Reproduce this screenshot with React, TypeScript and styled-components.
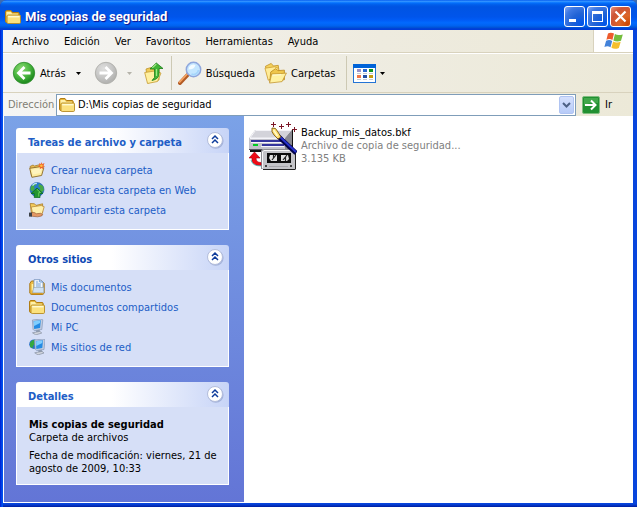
import React from "react";
import styled, { createGlobalStyle } from "styled-components";

const UI_FONT = `"DejaVu Sans Condensed", "DejaVu Sans", "Noto Sans", sans-serif`;

const GlobalStyle = createGlobalStyle`
  * { box-sizing: border-box; }
  body { margin: 0; background: #3c6bb0; }
  button, input { font: inherit; color: inherit; }
  button { cursor: pointer; }
`;

const Window = styled.div`
  display: flex;
  flex-direction: column;
  min-height: 100vh;
  padding: 0 4px 4px 3px;
  border-radius: 7px 7px 0 0;
  background: linear-gradient(90deg, #0019cf 0, #0050ee 2px, #0050ee 3px, transparent 3px),
    linear-gradient(180deg, #0845dd 0, #0845dd calc(100% - 3px), #001ea0 100%);
  font-family: ${UI_FONT};
  font-size: 11px;
  line-height: 13px;
  color: #000;
`;

const TitleBar = styled.header`
  display: flex;
  align-items: center;
  gap: 4px;
  height: 30px;
  margin: 0 -4px 0 -3px;
  padding: 3px 6px 0 5px;
  border-radius: 7px 7px 0 0;
  background: linear-gradient(180deg, #0058ee 0, #3593ff 4%, #288eff 6%, #127dff 8%, #036ffc 10%, #0262ee 14%, #0057e5 20%, #0054e3 24%, #0055eb 56%, #005bf5 66%, #026afe 76%, #0062ef 86%, #0052d6 92%, #003dd7 96%, #003dd7 100%);
`;

const Title = styled.h1`
  flex: 1;
  margin: 0;
  font-family: Roboto, "Liberation Sans", sans-serif;
  font-size: 13px;
  font-weight: 700;
  line-height: 18px;
  color: #fff;
  text-shadow: 1px 1px 1px #0f1089;
`;

const CaptionButtons = styled.div`
  display: flex;
  gap: 2px;
`;

const CaptionButton = styled.button<{ $danger?: boolean }>`
  width: 21px;
  height: 21px;
  padding: 0;
  border: 1px solid #fff;
  border-radius: 3px;
  background: ${(p) =>
    p.$danger
      ? "radial-gradient(circle at 90% 90%, #cc4600 0%, #dc6527 35%, #cd5436 70%, #e8917b 100%)"
      : "radial-gradient(circle at 90% 90%, #0054e9 0%, #2263d5 45%, #3f79e4 75%, #86a8f0 100%)"};
  svg { display: block; }
`;

const MenuRow = styled.div`
  display: flex;
  height: 23px;
  background: linear-gradient(90deg, #f5f5f4 0%, #eeebdf 60%, #ece9d8 100%);
  border-bottom: 1px solid #d8d2bd;
`;

const MenuBar = styled.nav`
  display: flex;
  flex: 1;
  align-items: center;
  gap: 15px;
  padding-left: 9px;
`;

const PlainButton = styled.button`
  display: flex;
  align-items: center;
  padding: 0;
  border: 0;
  background: none;
  white-space: nowrap;
`;

const Throbber = styled.div`
  display: flex;
  align-items: center;
  justify-content: center;
  width: 40px;
  height: 22px;
  border-left: 1px solid #d8d2bd;
  background: #fff;
`;

const Toolbar = styled.div`
  display: flex;
  align-items: center;
  height: 40px;
  padding-left: 9px;
  border-top: 1px solid #fff;
  border-bottom: 1px solid #d8d2bd;
  background: linear-gradient(90deg, #f5f5f4 0%, #efede3 50%, #ece9d8 100%);
`;

const ToolButton = styled(PlainButton)<{ $trail?: number }>`
  gap: 4px;
  margin-right: ${(p) => p.$trail ?? 0}px;
`;

const CaretButton = styled(PlainButton)<{ $trail?: number }>`
  margin-right: ${(p) => p.$trail ?? 0}px;
`;

const Separator = styled.div`
  width: 1px;
  height: 34px;
  margin: 0 6px 0 7px;
  background: #cdc9b4;
`;

const AddressBar = styled.form`
  display: flex;
  align-items: center;
  height: 23px;
  padding-left: 5px;
  background: linear-gradient(90deg, #f5f5f4 0%, #efede3 50%, #ece9d8 100%);
`;

const AddressLabel = styled.label`
  width: 48px;
  color: #7f7c73;
`;

const AddressField = styled.div`
  display: flex;
  flex: 1;
  align-items: center;
  gap: 3px;
  height: 22px;
  padding: 0 1px 0 2px;
  border: 1px solid #7f9db9;
  background: #fff;
`;

const AddressInput = styled.input`
  flex: 1;
  min-width: 0;
  height: 18px;
  padding: 0;
  border: 0;
  outline: 0;
  background: none;
`;

const DropButton = styled.button`
  display: flex;
  align-items: center;
  justify-content: center;
  width: 15px;
  height: 18px;
  padding: 0;
  border: 1px solid #b0c4f2;
  border-radius: 2px;
  background: linear-gradient(180deg, #d5e0fd, #b7cbf8);
`;

const GoButton = styled(PlainButton)`
  gap: 5px;
  width: 57px;
  padding-left: 6px;
`;

const Content = styled.div`
  display: flex;
  flex: 1;
  border-bottom: 1px solid #fff;
  border-left: 1px solid #fff;
  background: #fff;
`;

const Sidebar = styled.aside`
  display: flex;
  flex-direction: column;
  flex: 0 0 240px;
  gap: 15px;
  padding: 12px 15px 16px 12px;
  background: linear-gradient(180deg, #7ba2e7 0%, #6375d6 100%);
`;

const Panel = styled.section`
  display: flex;
  flex-direction: column;
`;

const PanelHeader = styled.header`
  display: flex;
  align-items: flex-start;
  justify-content: space-between;
  height: 25px;
  padding: 2px 4px 0 12px;
  border-radius: 3px 3px 0 0;
  background: linear-gradient(90deg, #fff 0%, #fff 45%, #c7d4f7 100%);
`;

const PanelTitle = styled.h2<{ $strong?: boolean }>`
  margin: 0;
  padding-top: 6px;
  font-size: 11px;
  line-height: 13px;
  font-weight: 700;
  color: ${(p) => (p.$strong ? "#0d48b4" : "#215dc6")};
`;

const PanelBody = styled.div<{ $details?: boolean }>`
  padding: ${(p) => (p.$details ? "11px 8px 9px 12px" : "7px 8px 9px 12px")};
  border: 1px solid #fff;
  border-top: 0;
  background: #d6dff7;
`;

const TaskList = styled.ul`
  margin: 0;
  padding: 0;
  list-style: none;
`;

const TaskLink = styled.a`
  display: flex;
  align-items: center;
  gap: 6px;
  height: 20px;
  color: #215dc6;
  text-decoration: none;
  white-space: nowrap;
  svg { flex: none; }
`;

const Paragraph = styled.p`
  margin: 0 0 5px;
  &:last-child { margin-bottom: 0; }
`;

const FileArea = styled.main`
  flex: 1;
  padding: 6px 5px;
`;

const FileTile = styled.a`
  display: flex;
  gap: 4px;
  color: #000;
  text-decoration: none;
  svg { flex: none; }
`;

const FileText = styled.div`
  padding-top: 4px;
  white-space: nowrap;
`;

const Muted = styled.div`
  color: #808080;
`;

function Folder({ size = 16 }: { size?: number }) {
  return (
    <svg width={size} height={size} viewBox="0 0 16 16" aria-hidden="true">
      <path d="M.5 3Q.5 1.5 2 1.5h4L7.5 3.5H13q1.2 0 1.2 1.2v8.8H2q-1.5 0-1.5-1.3z" fill="#e8b93c" stroke="#b07c14" />
      <path d="M1.5 3h4.3l1.3 1.7h5.8V7H1.5z" fill="#fff0a8" />
      <path d="M3.2 6h11.2q1.1 0 1.1 1v6.3q0 1.2-1.2 1.2H3.2Q2 14.5 2 13.3V7.1Q2 6 3.2 6z" fill="#fbe17f" stroke="#b58a25" strokeWidth=".9" />
      <path d="M3.2 7h11.2v1.4H3.2z" fill="#fffad2" />
    </svg>
  );
}

function OpenFolder() {
  return (
    <>
      <path d="M1 4.5 4 3l1.5 1 5-1.3 1.5.8V13L2.5 14z" fill="#e9bb4e" stroke="#a57c2c" strokeWidth=".8" />
      <path d="M.7 6.3 11.8 4.6l3 1.2-2.2 7.7-9.7 1.8z" fill="#fdeca0" stroke="#8c6a26" strokeWidth=".9" />
      <path d="M3 7.8 12.7 6l-1 5-8 1.5z" fill="#fff8ca" opacity=".7" />
    </>
  );
}

function NewFolderIcon() {
  return (
    <svg width="16" height="16" viewBox="0 0 16 16" aria-hidden="true">
      <OpenFolder />
      <path d="m12.3 0 .8 2.1 2.4-1-1 2.3 1.5 1-2 .6.5 2.3-2.1-1.4-1.6 1.4.1-2.3-2-.5 1.8-1.2-.8-2 2 .8z" fill="#ef6328" />
      <circle cx="12.4" cy="3.8" r="1.3" fill="#ffc23b" />
    </svg>
  );
}

function PublishIcon() {
  return (
    <svg width="16" height="16" viewBox="0 0 16 16" aria-hidden="true">
      <circle cx="8" cy="7.5" r="7" fill="#2879ce" stroke="#245d9b" strokeWidth=".6" />
      <path d="M2 4.5Q5 .5 8 1L7 3 4.8 4.2l1 2L4 9.5 1.4 8zM10 2l4 2 .9 4-2.6 3-1.8-3 .8-2-2-1z" fill="#48aa45" />
      <path d="M3.5 3.5Q5.5 1 8 1.5" stroke="#b8e0ff" strokeWidth="1.3" fill="none" />
      <path d="m8 6 6 5.5h-3V15.6H5.3V11.5H2z" fill="#22952e" stroke="#086b20" strokeWidth=".8" />
      <path d="m8 7.4 3.5 3.2H9.8v4" stroke="#6bd15b" fill="none" />
    </svg>
  );
}

function ShareIcon() {
  return (
    <svg width="16" height="16" viewBox="0 0 16 16" aria-hidden="true">
      <path d="m1.2 1.5 4.3.3 1.5 1.6 6.6-1.6v8.7L2.5 12z" fill="#f4cc5c" stroke="#a87a26" strokeWidth=".8" />
      <path d="m2.2 5 10-1.5 3 1.2-2.6 8.8-8.8-1z" fill="#fff0ac" stroke="#b98a36" strokeWidth=".8" />
      <path d="m2 10.8 3-.4 2.4 1.3 4.3-.4 2 1.2-1.1 1.5-4 .8-5-.5-2-.3z" fill="#e39865" stroke="#905029" strokeWidth=".6" />
      <path d="M0 10.6h3v4H0z" fill="#3c4148" />
    </svg>
  );
}

function DocumentsIcon() {
  return (
    <svg width="16" height="16" viewBox="0 0 16 16" aria-hidden="true">
      <path d="M.8 4.5 2.5 2H13l2.2 2.5v9.7l-1.4 1.3H2.2L.8 14.2z" fill="#edbd45" stroke="#a97819" />
      <path d="M5 .7h6L14 3v8H5z" fill="#f8fcff" stroke="#708db9" strokeWidth=".8" />
      <path d="M10.7.8V3H14M6.8 3h2.5M6.8 5h5M6.8 7h5" stroke="#6a9bd6" fill="none" />
      <path d="M3.4 5v6.5" stroke="#fff1a2" strokeWidth="1.4" />
      <path d="M4.5 8.5h10.3v5.4H3.6z" fill="#cfe1f3" stroke="#899eae" strokeWidth=".6" />
      <path d="M2.2 14.6h11.5" stroke="#d79c26" strokeWidth="1.4" />
    </svg>
  );
}

function Monitor() {
  return (
    <>
      <path d="m3.4 1 8.4-1 2 .8-1 9.7-7.4 1.2L4 10.3z" fill="#c3cddf" stroke="#8598ba" strokeWidth=".7" />
      <path d="m4.6 2 7.2-.8-.7 7.9-6 .9z" fill="#248be4" />
      <path d="m4.9 2.3 6.4-.7-.3 2.5-5.9 3z" fill="#80ceff" />
      <path d="m7 11.2 3.5-.5.8 2.6-4 .5z" fill="#8f9cb2" />
      <path d="M3.5 13.8 10.8 12.4l2 1.6-6 1.9z" fill="#d2d6de" stroke="#8690a2" strokeWidth=".7" />
    </>
  );
}

function ComputerIcon() {
  return (
    <svg width="16" height="16" viewBox="0 0 16 16" aria-hidden="true">
      <Monitor />
    </svg>
  );
}

function NetworkIcon() {
  return (
    <svg width="16" height="16" viewBox="0 0 16 16" aria-hidden="true">
      <circle cx="5" cy="5.2" r="4.8" fill="#2870c4" />
      <path d="M1 3.8Q3 .5 6 .8L5 3.2l1 2L3.7 7l.5 2L1 8z" fill="#35a83e" />
      <g transform="translate(2.2 0)"><Monitor /></g>
    </svg>
  );
}

function Chevrons() {
  return (
    <svg width="20" height="20" viewBox="0 0 20 20" aria-hidden="true">
      <circle cx="10.8" cy="11" r="7.8" fill="#7587b8" opacity=".45" />
      <circle cx="10" cy="10" r="7.5" fill="#fff" stroke="#b3bddb" />
      <path d="m7 9 3-3 3 3M7 13l3-3 3 3" stroke="#0d3b9b" strokeWidth="1.5" fill="none" />
    </svg>
  );
}

function RoundArrow({ forward }: { forward?: boolean }) {
  const id = forward ? "forwardFill" : "backFill";
  return (
    <svg width="24" height="24" viewBox="0 0 24 24" aria-hidden="true">
      <defs>
        <radialGradient id={id} cx="38%" cy="30%" r="65%">
          <stop offset="0" stopColor={forward ? "#dededd" : "#8bd873"} />
          <stop offset=".6" stopColor={forward ? "#c8c8c7" : "#4bb840"} />
          <stop offset="1" stopColor={forward ? "#b4b4b2" : "#238f22"} />
        </radialGradient>
      </defs>
      <circle cx="12" cy="12" r="10.7" fill={`url(#${id})`} stroke={forward ? "#aaa9a5" : "#2c8a2b"} strokeWidth=".8" />
      <path
        d={forward ? "M5.5 12H17M11.5 6l6 6-6 6" : "M18.5 12H7M12.5 6l-6 6 6 6"}
        fill="none" stroke="#fff" strokeWidth="2.8"
      />
    </svg>
  );
}

function Caret({ muted }: { muted?: boolean }) {
  return (
    <svg width="5" height="3" viewBox="0 0 5 3" aria-hidden="true">
      <path d="M0 0h5L2.5 3z" fill={muted ? "#b5b3aa" : "#000"} />
    </svg>
  );
}

function UpFolderIcon() {
  return (
    <svg width="20" height="24" viewBox="0 0 20 24" aria-hidden="true">
      <path d="m2 8 5-1.5 1.5 1.6L15 7v12L4 22z" fill="#f0cb57" stroke="#bd942a" strokeWidth=".8" />
      <path d="m.7 11.5 10-1.5L17 12l-3.5 8.5-10 2z" fill="#fff0a0" stroke="#c69c32" strokeWidth=".8" />
      <path d="m8 19.5 2.5-3V8H6l6.3-6L19 7.5h-4V13q0 5-7 6.5z" fill="#41b536" stroke="#1e7d1a" strokeWidth=".8" />
      <path d="m8.3 6.8 4-3.7M12.5 8v7" stroke="#a2e984" strokeWidth="1.2" />
    </svg>
  );
}

function SearchIcon() {
  return (
    <svg width="24" height="24" viewBox="0 0 24 24" aria-hidden="true">
      <path d="m2 22 8.5-9" stroke="#b35b25" strokeWidth="4" strokeLinecap="round" />
      <path d="m1.7 21 8-8.5" stroke="#f5a363" strokeWidth="1.8" strokeLinecap="round" />
      <circle cx="15.5" cy="8.5" r="7.2" fill="#c4e6ff" stroke="#8fa6dc" strokeWidth="1.5" />
      <path d="M10.5 8.5a5 5 0 0 1 7-4.6q-1 4.6-7 4.6z" fill="#f3fbff" />
      <path d="M20.5 9a5.2 5.2 0 0 1-7 4.2" fill="none" stroke="#a5d5fb" strokeWidth="1.8" />
    </svg>
  );
}

function FoldersIcon() {
  return (
    <svg width="23" height="24" viewBox="0 0 24 24" aria-hidden="true">
      <path d="m1.5 5 6-3 2.4 2.7 5-.7 1 10L5 19z" fill="#f5d25e" stroke="#be8d20" strokeWidth=".8" />
      <path d="m1 7 10-1.5 4.5 2L14 16l-9.6 3.5z" fill="#ffec98" stroke="#cc9b2c" strokeWidth=".8" />
      <path d="m7 11 5-3.5 2.8 2 6.5-.5V19L6 21.5z" fill="#efc64b" stroke="#b98619" strokeWidth=".8" />
      <path d="m8 13 9-.3 6.4-.7-4.6 9-13 1.5z" fill="#fff1a0" stroke="#c2932c" strokeWidth=".8" />
      <path d="m9 14.2 9-.4" stroke="#fffce0" />
    </svg>
  );
}

function ViewsIcon() {
  const colors = ["#9a91c8", "#2d68ce", "#10941c", "#f17749", "#254fa4", "#c79a12"];
  return (
    <svg width="23" height="19" viewBox="0 0 23 19" aria-hidden="true">
      <rect x=".5" y=".5" width="22" height="18" fill="#fff" stroke="#2474d5" />
      <path d="M0 0h23v4H0z" fill="#0063d8" />
      {colors.map((c, i) => (
        <g key={c}>
          <rect x={4 + (i % 3) * 6} y={i < 3 ? 5 : 11} width="4" height="3" fill={c} />
          <rect x={4 + (i % 3) * 6} y={i < 3 ? 9 : 15} width="4" height="1" fill="#c3c8d2" />
        </g>
      ))}
    </svg>
  );
}

function FlagIcon() {
  return (
    <svg width="20" height="18" viewBox="0 0 20 18" aria-hidden="true">
      <path d="M4 1.4Q7-.2 10 1.6L8.4 8Q5.7 6.2 2.4 7.7z" fill="#ed5b2d" />
      <path d="M10.9 2.1q3 1.8 7.9.3L17 8.8q-4.5 1.6-7.6-.4z" fill="#74bd3d" />
      <path d="M2.1 8.7q3.3-1.4 6.1.2l-1.7 6.4Q3.8 13.6.4 15z" fill="#4382d9" />
      <path d="M9.1 9.4q3.1 1.9 7.6.4L14.9 16q-4.3 1.8-7.5-.2z" fill="#f5bf2d" />
    </svg>
  );
}

function BackupIcon() {
  const stars: [number, number][] = [[24, 2], [32, 4], [39, 2], [45, 7]];
  return (
    <svg width="48" height="49" viewBox="0 0 48 49" aria-hidden="true">
      <path d="M1 16h36l6-8h1v18l-4 4H1z" fill="#111" />
      <path d="M6 8h37l-7 8H0z" fill="#d3d3da" />
      <path d="M6.5 8.5h36M6 9l-5 7h34" stroke="#f4f4f8" fill="none" />
      <path d="M0 16h36v12H0z" fill="#c2c2ca" />
      <path d="m36 16 7-8v15l-7 6z" fill="#898991" />
      <path d="M2 18h33v2H2zM13 22h22v2H13z" fill="#34349c" />
      <path d="M1 16.5h35M2 20.5h33M12 24.5h23" stroke="#f4f4fa" />
      <path d="M4 22h5v2H4z" fill="#00ca22" />
      <path d="M0 27.5h36" stroke="#55555f" />
      <path d="M14 28h33v19l-1 1H14z" fill="#222" />
      <path d="M14 27h30l2 2v18H12V29z" fill="#c4c4c8" />
      <path d="M12.5 47V29l2-1.5h29" stroke="#8d8d93" fill="none" />
      <path d="M13.5 46V30l1.5-1.5h28" stroke="#f8f8f8" fill="none" />
      <path d="M18 31h24v10H18z" fill="#0c0c0c" />
      <path d="M21 33h7v6h-6l-2-3zM32 33h7l1 4-2 2h-6z" fill="#e1e1e1" />
      <path d="m23 38 4-5M34 38l4-5M24.5 33v3M36.5 35v4" stroke="#222" strokeWidth="1.2" />
      <path d="M16 43h2v2h-2zM41 43h2v2h-2z" fill="#444" />
      <path d="M20 44.5h19" stroke="#a5a5aa" />
      <path d="m29 14 18 17" stroke="#00004a" strokeWidth="4.5" />
      <path d="m30 14 17 16" stroke="#2733cc" strokeWidth="2" />
      <path d="M23 6q4-1 6 4l3 5-3 2-4-4q-3-3-2-7z" fill="#ffe070" stroke="#6e4a0a" strokeWidth=".8" />
      <path d="m24.5 8 4 6" stroke="#fffbd0" strokeWidth="1.4" />
      {stars.map(([x, y]) => (
        <path key={x} d={`M${x - 2} ${y + 0.5}h5M${x + 0.5} ${y - 2}v5`} stroke="#7c1626" strokeWidth="1" />
      ))}
      <path d="M5.5 30 0 36h3v3q1 4.5 9 4.5v-3q-5 0-5-4.5h4z" fill="#f00b15" stroke="#a60015" strokeWidth=".6" />
      <path d="M2 38q1 6 10 6" stroke="#24b8b8" fill="none" strokeWidth=".7" />
    </svg>
  );
}

function GoIcon() {
  return (
    <svg width="18" height="18" viewBox="0 0 18 18" aria-hidden="true">
      <rect x=".5" y=".5" width="17" height="17" rx="1.5" fill="#219032" stroke="#7fbd7f" />
      <path d="M2 2h14v5Q7 6 2 10z" fill="#55b75a" opacity=".6" />
      <path d="M3 9h10M9 4.5 13.5 9 9 13.5" stroke="#fff" strokeWidth="2" fill="none" />
    </svg>
  );
}

const menus = ["Archivo", "Edición", "Ver", "Favoritos", "Herramientas", "Ayuda"];

interface Task {
  label: string;
  icon: React.ReactNode;
}

const folderTasks: Task[] = [
  { label: "Crear nueva carpeta", icon: <NewFolderIcon /> },
  { label: "Publicar esta carpeta en Web", icon: <PublishIcon /> },
  { label: "Compartir esta carpeta", icon: <ShareIcon /> },
];

const places: Task[] = [
  { label: "Mis documentos", icon: <DocumentsIcon /> },
  { label: "Documentos compartidos", icon: <Folder /> },
  { label: "Mi PC", icon: <ComputerIcon /> },
  { label: "Mis sitios de red", icon: <NetworkIcon /> },
];

function SidePanel(props: { title: string; strong?: boolean; details?: boolean; children: React.ReactNode }) {
  return (
    <Panel>
      <PanelHeader>
        <PanelTitle $strong={props.strong}>{props.title}</PanelTitle>
        <PlainButton type="button" aria-label={`Contraer ${props.title}`}><Chevrons /></PlainButton>
      </PanelHeader>
      <PanelBody $details={props.details}>{props.children}</PanelBody>
    </Panel>
  );
}

function Tasks({ items }: { items: Task[] }) {
  return (
    <TaskList>
      {items.map((t) => (
        <li key={t.label}><TaskLink href="#">{t.icon}{t.label}</TaskLink></li>
      ))}
    </TaskList>
  );
}

export default function App() {
  return (
    <>
      <GlobalStyle />
      <Window>
        <TitleBar>
          <Folder />
          <Title>Mis copias de seguridad</Title>
          <CaptionButtons>
            <CaptionButton type="button" aria-label="Minimizar">
              <svg width="19" height="19"><path d="M4 12h7v3H4z" fill="#fff" /></svg>
            </CaptionButton>
            <CaptionButton type="button" aria-label="Maximizar">
              <svg width="19" height="19"><path d="M4 4h11v11H4zM5 7v7h9V7z" fill="#fff" fillRule="evenodd" /></svg>
            </CaptionButton>
            <CaptionButton type="button" aria-label="Cerrar" $danger>
              <svg width="19" height="19"><path d="m4.5 4.5 10 10m0-10-10 10" stroke="#fff" strokeWidth="2.2" /></svg>
            </CaptionButton>
          </CaptionButtons>
        </TitleBar>

        <MenuRow>
          <MenuBar>
            {menus.map((m) => <PlainButton type="button" key={m}>{m}</PlainButton>)}
          </MenuBar>
          <Throbber><FlagIcon /></Throbber>
        </MenuRow>

        <Toolbar>
          <ToolButton type="button" $trail={10}><RoundArrow />Atrás</ToolButton>
          <CaretButton type="button" aria-label="Historial atrás" $trail={13}><Caret /></CaretButton>
          <ToolButton type="button" aria-label="Adelante" disabled $trail={9}><RoundArrow forward /></ToolButton>
          <CaretButton type="button" aria-label="Historial adelante" disabled $trail={12}><Caret muted /></CaretButton>
          <ToolButton type="button" aria-label="Arriba"><UpFolderIcon /></ToolButton>
          <Separator />
          <ToolButton type="button" $trail={9}><SearchIcon />Búsqueda</ToolButton>
          <ToolButton type="button" $trail={4}><FoldersIcon />Carpetas</ToolButton>
          <Separator />
          <ToolButton type="button" aria-label="Vistas"><ViewsIcon /><Caret /></ToolButton>
        </Toolbar>

        <AddressBar onSubmit={(e) => e.preventDefault()}>
          <AddressLabel htmlFor="address">Dirección</AddressLabel>
          <AddressField>
            <Folder />
            <AddressInput id="address" defaultValue="D:\Mis copias de seguridad" />
            <DropButton type="button" aria-label="Mostrar direcciones">
              <svg width="9" height="6" viewBox="0 0 9 6"><path d="m1 1 3.5 3.5L8 1" stroke="#4d6185" strokeWidth="2" fill="none" /></svg>
            </DropButton>
          </AddressField>
          <GoButton type="submit"><GoIcon />Ir</GoButton>
        </AddressBar>

        <Content>
          <Sidebar>
            <SidePanel title="Tareas de archivo y carpeta"><Tasks items={folderTasks} /></SidePanel>
            <SidePanel title="Otros sitios" strong><Tasks items={places} /></SidePanel>
            <SidePanel title="Detalles" details>
              <Paragraph><strong>Mis copias de seguridad</strong><br />Carpeta de archivos</Paragraph>
              <Paragraph>Fecha de modificación: viernes, 21 de agosto de 2009, 10:33</Paragraph>
            </SidePanel>
          </Sidebar>
          <FileArea>
            <FileTile href="#">
              <BackupIcon />
              <FileText>
                <div>Backup_mis_datos.bkf</div>
                <Muted>Archivo de copia de seguridad...</Muted>
                <Muted>3.135 KB</Muted>
              </FileText>
            </FileTile>
          </FileArea>
        </Content>
      </Window>
    </>
  );
}
